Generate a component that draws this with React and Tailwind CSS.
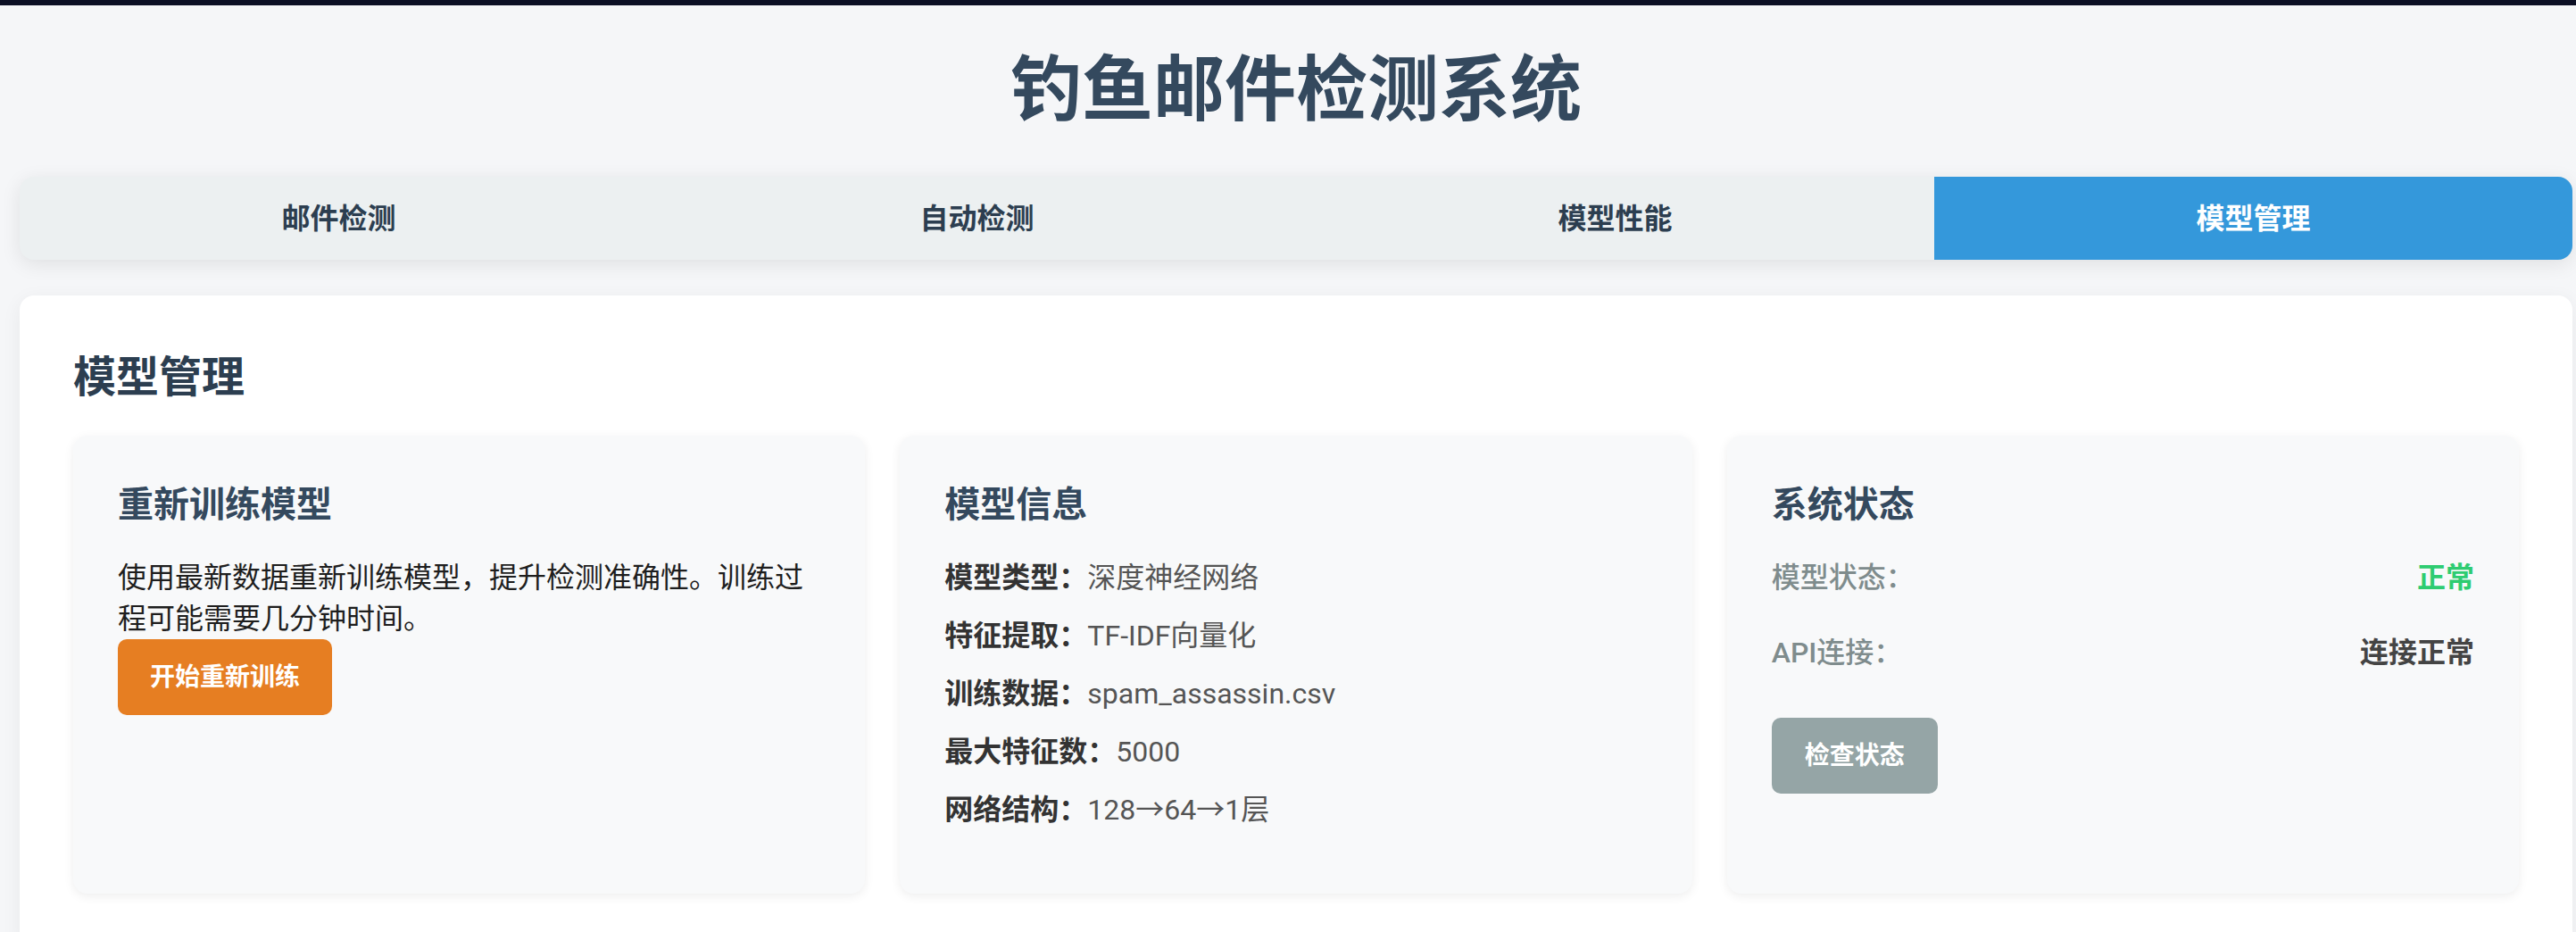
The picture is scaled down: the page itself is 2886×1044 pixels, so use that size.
import React from "react";

const tabs = ["邮件检测", "自动检测", "模型性能", "模型管理"];

function Card({ title, children }) {
  return (
    <div className="h-[513px] rounded-2xl bg-[#f8f9fa] px-[50px] pt-[50px] shadow-[0_3px_12px_rgba(0,0,0,0.07)]">
      <h3 className="mb-[30px] text-[40px] font-bold leading-[56px] text-[#34495e]">{title}</h3>
      {children}
    </div>
  );
}

export default function App() {
  return (
    <div className="min-h-screen w-[2886px] overflow-hidden bg-[#f5f6f8] font-['Roboto','Noto_Sans_CJK_SC',sans-serif]">
      <div className="h-[6px] bg-[#0c0f24]" />
      <div className="w-[2882px] pl-[22px]">
        <h1 className="mt-[47px] mb-[49px] text-center text-[80px] font-bold leading-[96px] text-[#34495e]">
          钓鱼邮件检测系统
        </h1>
        <div className="grid h-[93px] grid-cols-4 overflow-hidden rounded-2xl bg-[#ecf0f1] shadow-[0_5px_22px_rgba(0,0,0,0.09)]">
          {tabs.map((t, i) => (
            <div
              key={t}
              className={
                i === 3
                  ? "flex items-center justify-center bg-[#3498db] text-[32px] font-bold text-white"
                  : "flex items-center justify-center text-[32px] font-bold text-[#2c3e50]"
              }
            >
              {t}
            </div>
          ))}
        </div>
        <div className="mt-[40px] rounded-2xl bg-white px-[60px] pt-[60px] pb-[60px] shadow-[0_5px_22px_rgba(0,0,0,0.06)]">
          <h2 className="mb-[33px] text-[48px] font-bold leading-[64px] text-[#2c3e50]">模型管理</h2>
          <div className="grid grid-cols-3 gap-[39px]">
            <Card title="重新训练模型">
              <p className="text-[32px] leading-[46px] text-[#1e1e1e]">
                使用最新数据重新训练模型，提升检测准确性。训练过程可能需要几分钟时间。
              </p>
              <button className="flex h-[85px] w-[240px] items-center justify-center rounded-[10px] bg-[#e67e22] text-[28px] font-bold text-white">
                开始重新训练
              </button>
            </Card>
            <Card title="模型信息">
              {[
                ["模型类型：", "深度神经网络"],
                ["特征提取：", "TF-IDF向量化"],
                ["训练数据：", "spam_assassin.csv"],
                ["最大特征数：", "5000"],
                ["网络结构：", "128→64→1层"],
              ].map(([k, v]) => (
                <p key={k} className="mb-[19px] text-[32px] leading-[46px] text-[#555]">
                  <span className="font-bold text-[#333]">{k}</span>
                  {v}
                </p>
              ))}
            </Card>
            <Card title="系统状态">
              <div className="mb-[38px] flex justify-between text-[32px] leading-[46px]">
                <span className="font-medium text-[#7f8c8d]">模型状态：</span>
                <span className="font-bold text-[#2ecc71]">正常</span>
              </div>
              <div className="flex justify-between text-[32px] leading-[46px]">
                <span className="font-medium text-[#7f8c8d]">API连接：</span>
                <span className="font-bold text-[#444]">连接正常</span>
              </div>
              <button className="mt-[50px] flex h-[85px] w-[186px] items-center justify-center rounded-[10px] bg-[#95a5a6] text-[28px] font-bold text-white">
                检查状态
              </button>
            </Card>
          </div>
        </div>
      </div>
    </div>
  );
}
